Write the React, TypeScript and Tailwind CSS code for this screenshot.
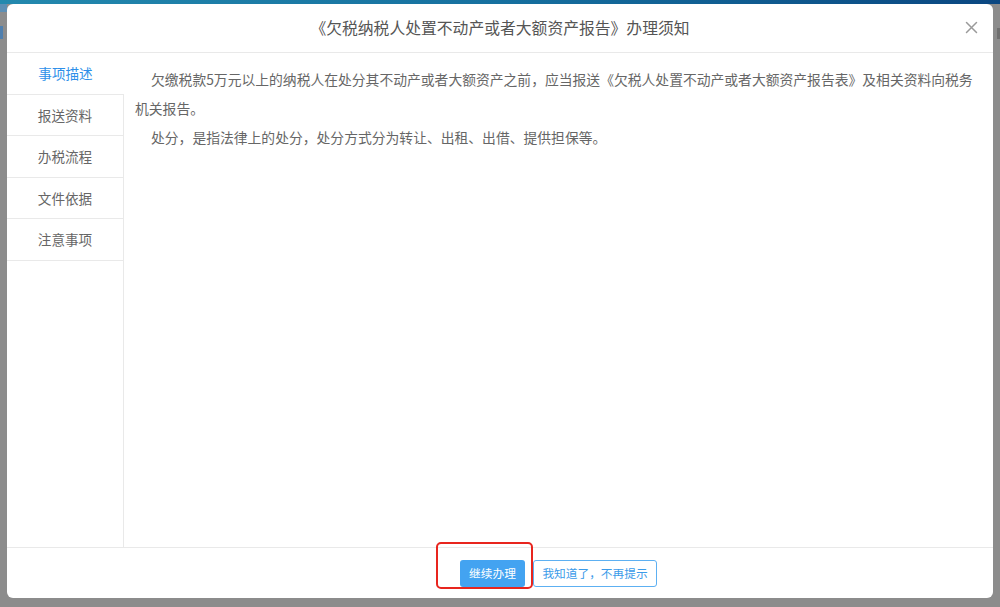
import React from "react";

const items = [
  { label: "事项描述", h: "h-[42px]", active: true },
  { label: "报送资料", h: "h-[41px]", active: false },
  { label: "办税流程", h: "h-[42px]", active: false },
  { label: "文件依据", h: "h-[41px]", active: false },
  { label: "注意事项", h: "h-[42px]", active: false },
];

export default function App() {
  return (
    <div className="relative w-[1000px] h-[607px] overflow-hidden bg-[#8c8c8c] flex flex-col [font-family:'Noto_Sans_CJK_SC','Noto_Sans',sans-serif]">
      <div className="h-[4px] w-full shrink-0 bg-linear-to-r from-[#2389ae] via-[#16709f] to-[#0b4781]" />
      <div className="flex h-[594px] shrink-0">
        <div className="w-[7px] shrink-0 flex flex-col">
          <div className="h-[8px] w-[7px] bg-[#5d8fb5]" />
          <div className="mt-[14px] h-[13px] w-[3px] bg-[#4f7fae]" />
        </div>
        <div className="w-[986px] shrink-0 bg-white rounded-[6px] flex flex-col overflow-hidden">
          <div className="relative h-[49px] shrink-0 border-b border-[#e9e9e9] flex items-center justify-center">
            <span className="text-[15.8px] text-[#555555] leading-none">《欠税纳税人处置不动产或者大额资产报告》办理须知</span>
            <button className="absolute right-[15px] top-[17px] w-[13px] h-[13px] flex items-center justify-center">
              <svg width="13" height="13" viewBox="0 0 13 13" fill="none">
                <path d="M1.5 1.5 L11.5 11.5 M11.5 1.5 L1.5 11.5" stroke="#9a9a9a" strokeWidth="1.5" strokeLinecap="round" />
              </svg>
            </button>
          </div>
          <div className="flex h-[494px] shrink-0">
            <div className="w-[117px] shrink-0 flex flex-col">
              {items.map((it) => (
                <div
                  key={it.label}
                  className={`${it.h} shrink-0 flex items-center justify-center border-b border-[#e9e9e9] text-[13.6px] ${
                    it.active ? "text-[#2d8fe9]" : "border-r text-[#666666]"
                  }`}
                >
                  {it.label}
                </div>
              ))}
              <div className="flex-1 border-r border-[#e9e9e9]" />
            </div>
            <div className="flex-1 pl-[11px] pr-[12px] pt-[12px] text-[13.8px] leading-[29px] text-[#666666]">
              <p className="indent-[16px]">
                欠缴税款5万元以上的纳税人在处分其不动产或者大额资产之前，应当报送《欠税人处置不动产或者大额资产报告表》及相关资料向税务机关报告。
              </p>
              <p className="indent-[16px]">处分，是指法律上的处分，处分方式分为转让、出租、出借、提供担保等。</p>
            </div>
          </div>
          <div className="h-[51px] shrink-0 border-t border-[#e9e9e9] flex items-center justify-center gap-[8px] pl-[117px]">
            <button className="w-[65px] h-[27px] rounded-[3px] bg-[#43a3f1] text-white text-[11.7px] leading-none">继续办理</button>
            <button className="w-[124px] h-[27px] rounded-[3px] border border-[#5db0f2] bg-white text-[#3b9be9] text-[11.7px] leading-none">
              我知道了，不再提示
            </button>
          </div>
        </div>
        <div className="w-[7px] shrink-0 flex flex-col">
          <div className="mt-[24px] ml-[4px] h-[11px] w-[3px] bg-[#6f6f6f]" />
        </div>
      </div>
      <div className="absolute left-[436px] top-[542px] w-[97px] h-[47px] border-2 border-[#e8251e] rounded-[5px]" />
    </div>
  );
}
